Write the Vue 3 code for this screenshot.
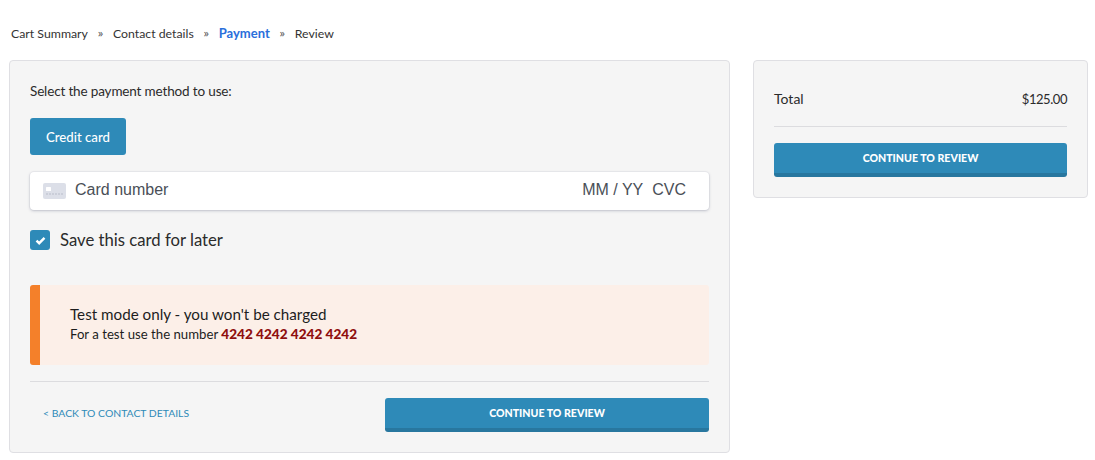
<template>
  <div class="checkout">
    <nav class="steps">
      <template v-for="(s, i) in steps" :key="s">
        <span class="step" :class="{ active: s === 'Payment' }">{{ s }}</span>
        <span v-if="i < steps.length - 1" class="sep">»</span>
      </template>
    </nav>

    <div class="columns">
      <section class="panel main">
        <p class="intro">Select the payment method to use:</p>
        <button class="method">Credit card</button>

        <div class="card-field">
          <svg class="card-icon" width="23" height="16" viewBox="0 0 23 16">
            <rect width="23" height="16" rx="2" fill="#dcdfe8" />
            <rect x="3" y="4" width="5" height="4" rx="0.5" fill="#fff" />
            <path d="M3 11h17" stroke="#b9bdca" stroke-width="1" stroke-dasharray="2 1" />
          </svg>
          <span class="card-number">Card number</span>
          <span class="card-extra">MM / YY</span>
          <span class="card-extra cvc">CVC</span>
        </div>

        <label class="save">
          <span class="box">
            <svg width="11" height="9" viewBox="0 0 11 9">
              <path d="M1.5 4.6 4.2 7.2 9.5 1.8" fill="none" stroke="#fff" stroke-width="2.4" />
            </svg>
          </span>
          Save this card for later
        </label>

        <div class="notice">
          <div class="notice-title">Test mode only - you won't be charged</div>
          <div class="notice-text">For a test use the number <b>4242 4242 4242 4242</b></div>
        </div>

        <div class="actions">
          <a class="back" href="#">&lt; BACK TO CONTACT DETAILS</a>
          <button class="continue wide">CONTINUE TO REVIEW</button>
        </div>
      </section>

      <aside class="panel side">
        <div class="total">
          <span>Total</span>
          <span class="amount">$125.00</span>
        </div>
        <button class="continue">CONTINUE TO REVIEW</button>
      </aside>
    </div>
  </div>
</template>

<script setup>
const steps = ['Cart Summary', 'Contact details', 'Payment', 'Review']
</script>

<style>
body {
  background: #fff;
}
</style>

<style scoped>
.checkout {
  width: 1095px;
  height: 460px;
  overflow: hidden;
  box-sizing: border-box;
  padding: 24px 7px 0 9px;
  font-family: Lato, "Noto Sans", sans-serif;
  color: #2b2b2b;
}

.steps {
  display: flex;
  align-items: center;
  height: 18px;
  padding-left: 2px;
  font-size: 12.3px;
  color: #333;
}

.sep {
  width: 25px;
  text-align: center;
  font-family: "Noto Sans", sans-serif;
  font-size: 10px;
  color: #555;
}

.step.active {
  font-size: 13px;
  font-weight: 700;
  color: #2a6fdb;
}

.columns {
  display: flex;
  justify-content: space-between;
  align-items: flex-start;
  margin-top: 18px;
}

.panel {
  box-sizing: border-box;
  background: #f5f5f5;
  border: 1px solid #dfdfe3;
  border-radius: 4px;
}

.main {
  width: 721px;
  height: 393px;
  padding: 20px 20px 0;
}

.side {
  width: 335px;
  height: 138px;
  padding: 20px 20px 0;
}

.intro {
  margin: 0;
  font-size: 13.5px;
  letter-spacing: -0.15px;
  line-height: 20px;
}

.method {
  display: block;
  width: 96px;
  height: 37px;
  margin-top: 17px;
  border: none;
  border-radius: 3px;
  background: #2e8ab8;
  color: #fff;
  font: 500 13.2px Lato, sans-serif;
}

.card-field {
  display: flex;
  align-items: center;
  height: 38px;
  margin-top: 17px;
  padding: 0 23px 0 13px;
  background: #fff;
  border-radius: 4px;
  box-shadow: 0 0 0 1px rgba(50, 60, 90, 0.04), 0 1px 3px rgba(50, 60, 90, 0.25);
  font-family: "Liberation Sans", Arial, sans-serif;
  font-size: 16px;
  color: #4a4f57;
}

.card-number {
  flex: 1;
  margin-left: 9px;
}

.card-number,
.card-extra {
  margin-bottom: 2px;
}

.cvc {
  margin-left: 9px;
}

.save {
  display: flex;
  align-items: center;
  gap: 10px;
  margin-top: 20px;
  font-size: 16.7px;
  line-height: 20px;
}

.box {
  display: flex;
  align-items: center;
  justify-content: center;
  width: 20px;
  height: 20px;
  border-radius: 3px;
  background: #2e8ab8;
}

.notice {
  height: 80px;
  box-sizing: border-box;
  margin-top: 35px;
  padding: 19px 30px 0;
  background: #fcefe8;
  border-left: 10px solid #f4802a;
  border-radius: 3px;
  color: #1d1d1d;
}

.notice-title {
  font-size: 15.2px;
  line-height: 20px;
}

.notice-text {
  font-size: 13.2px;
  line-height: 20px;
}

.notice-text b {
  color: #8f0e0e;
  font-size: 13.6px;
  font-weight: 900;
}

.actions {
  display: flex;
  justify-content: space-between;
  align-items: flex-start;
  margin-top: 16px;
  padding-top: 16px;
  border-top: 1px solid #dcdcdf;
}

.back {
  margin: 7px 0 0 13px;
  font-size: 10.4px;
  line-height: 16px;
  color: #2e8ab8;
  text-decoration: none;
}

.continue {
  display: block;
  width: 100%;
  height: 34px;
  padding: 0 0 1px;
  border: none;
  border-bottom: 4px solid #28779f;
  border-radius: 3px;
  background: #2e8ab8;
  color: #fff;
  font: 900 10.6px Lato, sans-serif;
}

.continue.wide {
  width: 324px;
}

.total {
  display: flex;
  justify-content: space-between;
  height: 46px;
  padding-top: 9px;
  box-sizing: border-box;
  margin-bottom: 16px;
  border-bottom: 1px solid #dcdcdf;
  font-size: 14px;
  line-height: 18px;
}

.amount {
  font-size: 13px;
  letter-spacing: -0.45px;
}
</style>
